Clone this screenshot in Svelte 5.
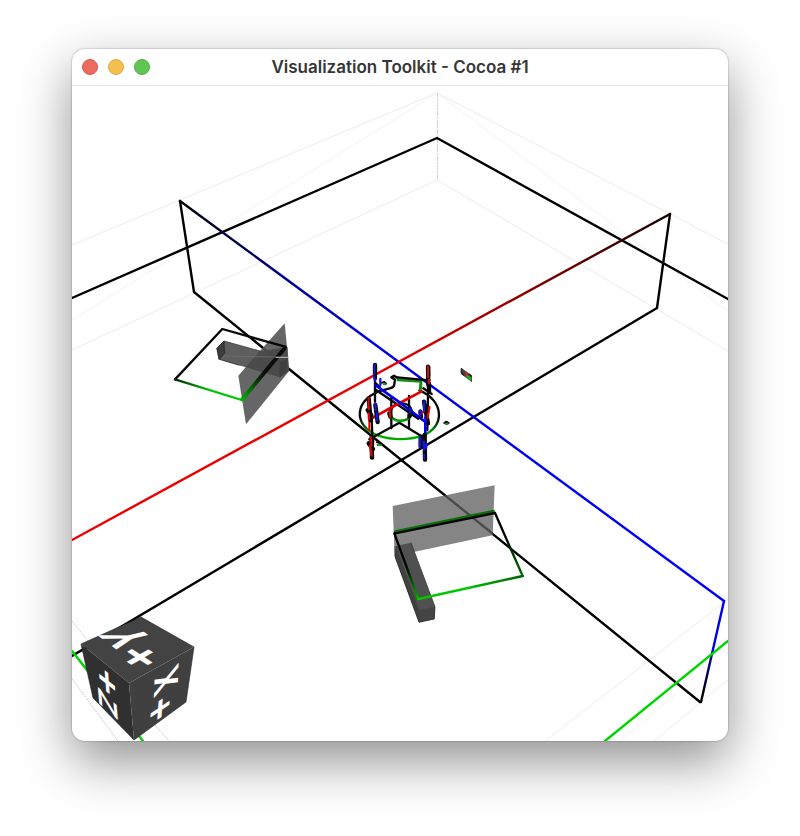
<script>
  const title = 'Visualization Toolkit - Cocoa #1';
  const controls = [
    { name: 'Close', color: '#ec6a5e', edge: '#d9574c' },
    { name: 'Minimize', color: '#f4bf4f', edge: '#dfa73d' },
    { name: 'Zoom', color: '#61c554', edge: '#4fae43' }
  ];

  // Faint edges of the world bounding box
  const guides = [
    'M72 245 437 93 728 244',
    'M72 350 437 180 728 351',
    'M728 599 545 741',
    'M728 680 654 741'
  ];
  const faintGuides = ['M72 320 437 93 728 311', 'M677 693 620 741'];

  const outlines = [
    'M72 298 437 138 728 299',
    'M670 214 657 308 72 656',
    'M180 201 194 292 700 702'
  ];

  // Glyphs lying on the faces of the orientation cube
  const labels = [
    { text: '+', matrix: 'matrix(-.54 -.35 .56 -.32 140 657)', size: 76, y: 25 },
    { text: 'Y', matrix: 'matrix(-.36 -.27 .69 -.16 126 638)', size: 82, y: 29 },
    { text: '+', matrix: 'matrix(.04 -.56 .56 -.38 160 709)', size: 66, y: 22 },
    { text: 'X', matrix: 'matrix(.02 -.5 .58 -.4 166 681)', size: 60, y: 21 },
    { text: '+', matrix: 'matrix(.05 .66 -.48 -.38 107 682)', size: 64, y: 21 },
    { text: 'Z', matrix: 'matrix(.05 .56 -.5 -.46 108 704)', size: 54, y: 19 }
  ];
</script>

<main>
  <section class="window" aria-label={title}>
    <header>
      <div class="controls">
        {#each controls as c}
          <button aria-label={c.name} style:background={c.color} style:border-color={c.edge}></button>
        {/each}
      </div>
      <h1>{title}</h1>
    </header>

    <svg class="scene" viewBox="72 86 656 655" role="img" aria-label="3D scene">
      <defs>
        <linearGradient id="red" gradientUnits="userSpaceOnUse" x1="670" y1="214" x2="72" y2="540">
          <stop offset="0" stop-color="#100" /><stop offset=".22" stop-color="#800000" />
          <stop offset=".45" stop-color="#e60000" /><stop offset="1" stop-color="#f00000" />
        </linearGradient>
        <linearGradient id="blue" gradientUnits="userSpaceOnUse" x1="180" y1="201" x2="724" y2="601">
          <stop offset="0" stop-color="#000" /><stop offset=".18" stop-color="#000088" />
          <stop offset=".36" stop-color="#0000e8" /><stop offset="1" stop-color="#0000fa" />
        </linearGradient>
        <linearGradient id="drop" gradientUnits="userSpaceOnUse" x1="724" y1="601" x2="701" y2="702">
          <stop offset="0" stop-color="#0000fa" /><stop offset=".45" stop-color="#0000d8" /><stop offset=".9" stop-color="#000" />
        </linearGradient>
        <linearGradient id="green1" gradientUnits="userSpaceOnUse" x1="45" y1="208" x2="150" y2="240">
          <stop offset="0" stop-color="#042804" /><stop offset="1" stop-color="#00c800" />
        </linearGradient>
        <linearGradient id="green2" gradientUnits="userSpaceOnUse" x1="245" y1="270" x2="320" y2="182">
          <stop offset="0" stop-color="#00b400" /><stop offset=".7" stop-color="#0a280a" /><stop offset="1" stop-color="#0c0c0c" />
        </linearGradient>
        <linearGradient id="green3" gradientUnits="userSpaceOnUse" x1="145" y1="387" x2="458" y2="318">
          <stop offset="0" stop-color="#00c800" /><stop offset=".45" stop-color="#00c800" /><stop offset="1" stop-color="#006000" />
        </linearGradient>
        <linearGradient id="green4" gradientUnits="userSpaceOnUse" x1="375" y1="128" x2="458" y2="318">
          <stop offset=".35" stop-color="#000" /><stop offset="1" stop-color="#007000" />
        </linearGradient>
        <linearGradient id="green5" gradientUnits="userSpaceOnUse" x1="73" y1="188" x2="145" y2="387">
          <stop offset=".5" stop-color="#000" /><stop offset="1" stop-color="#00b400" />
        </linearGradient>
        <linearGradient id="ring" gradientUnits="userSpaceOnUse" x1="0" y1="205" x2="0" y2="250">
          <stop offset="0" stop-color="#080808" /><stop offset="1" stop-color="#00a800" />
        </linearGradient>
        <linearGradient id="hub" gradientUnits="userSpaceOnUse" x1="0" y1="190" x2="0" y2="212">
          <stop offset="0" stop-color="#080808" /><stop offset="1" stop-color="#00a800" />
        </linearGradient>
      </defs>

      <g fill="none">
        {#each guides as d}<path {d} stroke="#ebebeb" />{/each}
        {#each faintGuides as d}<path {d} stroke="#f2f2f2" />{/each}
        <path d="M437.500 93V180" stroke="#d2d2d2" stroke-dasharray="5 1 2 1" />
        <path d="M72 621 118 678M72 679 118 741M155 725 169 741" stroke="#bbb" stroke-width=".8" stroke-dasharray="2 1" />
      </g>

      <g fill="none" stroke-width="2.400" stroke-linejoin="round" stroke-linecap="round">
        {#each outlines as d}<path {d} stroke="#000" />{/each}
        <path d="M180 201 724 601" stroke="url(#blue)" />
        <path d="M724 601 701 702" stroke="url(#drop)" />
        <path d="M670 214 72 540" stroke="url(#red)" />
        <path d="M728 641 605 741M72 651 143 741" stroke="#00d400" />
      </g>

      <!-- left bracket -->
      <g transform="translate(160 310) scale(.33333)">
        <path d="M374 40 388 182 258 343 235 197 295 128Z" fill="#555" fill-opacity=".9" />
        <path d="M192 93 300 123 383 112 386 184 360 202 175 148 170 115Z" fill="#484848" fill-opacity=".88" />
        <path d="M192 93 194 130 178 148 170 115Z" fill="#3c3c3c" />
        <path d="M192 93 194 130 178 148 170 115ZM192 93 300 123M178 148 238 166" fill="none" stroke="#222" stroke-width="2" />
        <path d="M360 155 383 143 380 187 358 203Z" fill="#404040" />
        <g fill="none" stroke-width="7" stroke-linecap="round" stroke-linejoin="round">
          <path d="M45 208 187 57 375 110" stroke="#080808" />
          <path d="M45 208 245 270" stroke="url(#green1)" />
          <path d="M247 268 375 113" stroke="url(#green2)" stroke-width="12" />
        </g>
        <path d="M190 138 386 142" stroke="#777" stroke-width="2" />
        <path d="M347 142 386 142" stroke="#bbb" stroke-width="3" />
      </g>

      <!-- front bracket -->
      <g transform="translate(370 470) scale(.33333)">
        <path d="M68 108 374 46 368 196 74 258Z" fill="#707070" fill-opacity=".85" />
        <path d="M220 72 368 190" stroke="#000" stroke-opacity=".25" stroke-width="6" />
        <path d="M78 228 123 218 195 410 193 447 147 457 75 260Z" fill="#505050" />
        <path d="M78 228 147 420 147 457 75 260Z" fill="#404040" />
        <path d="M147 420 195 410 193 447 147 457Z" fill="#454545" />
        <path d="M123 218 195 410 193 447 147 457 75 260V228" fill="none" stroke="#222" stroke-width="2" />
        <g fill="none" stroke-width="7" stroke-linecap="round">
          <path d="M75 184 371 123" stroke="#0a6e0a" />
          <path d="M75 190 375 129" stroke="#060606" />
          <path d="M375 129 458 318" stroke="url(#green4)" />
          <path d="M73 190 145 387" stroke="url(#green5)" />
          <path d="M145 387 458 318" stroke="url(#green3)" />
        </g>
      </g>

      <!-- central assembly -->
      <g transform="translate(340 350) scale(.33333)" fill="none" stroke-linecap="round" stroke-linejoin="round">
        <path d="M134 119C40 143 36 228 115 257C155 271 207 271 247 257C316 232 314 152 238 121" stroke="url(#ring)" stroke-width="7" />
        <g stroke="#080808" stroke-width="7">
          <path d="M105 45V155M105 98 120 112M154 142V235M207 138V235M265 85 262 240M95 205 97 260" />
          <path d="M108 120 235 206M88 268 178 218 250 262M250 115 275 132" />
          <path d="M154 82 162 77 172 83M154 82 165 89 162 108C154 119 142 113 134 121" />
        </g>
        <path d="M152 195C156 218 208 221 216 189" stroke="url(#hub)" stroke-width="8" />
        <path d="M152 188C151 153 216 148 216 189" stroke="#080808" stroke-width="6" />
        <path d="M174 89 243 94 241 119" stroke="#158a15" stroke-width="9" />
        <path d="M172 82 268 91" stroke="#080808" stroke-width="7" />
        <path d="M90 208 162 168 245 124" stroke="#e00000" stroke-width="8" />
        <path d="M107 106 180 158 256 216V258" stroke="#0000ee" stroke-width="8" />
        <path d="M88 210V240" stroke="#e00000" stroke-width="6" />
        <g stroke="#080808" stroke-width="13">
          <path d="M86 145 92 210M106 165 113 216M95 260 96 323M252 155 264 220M264 50 265 105M254 255 255 329M105 45V72" />
          <path d="M267 102V125M83 180 94 196M86 280 99 297M211 182 208 200M148 190 151 200M241 185 243 200M242 265V290" />
        </g>
        <g stroke="#c80d0d" stroke-width="7">
          <path d="M86 145V178M86 190 87 207M92 262 95 285M90 288 95 317M264 50V80M266 90 267 99M268 171 263 203M149 181 151 201M251 185 245 190" />
        </g>
        <g stroke="#1515dc" stroke-width="7">
          <path d="M104 45 104 72M102 80 105 92M106 162 107 180M111 190 112 210M252 155V182M241 181V199M255 202 257 215M240 262 240 291M252 275 253 300M260 282 258 295M253 315 254 325M212 175 211 188M121 87V105" />
        </g>
        <path d="M109 50 109 87M91 148V166M269 50V78M258 164V195M101 270 100 289M257 300V326" stroke="#080808" stroke-width="4" />
        <g stroke-width="6">
          <path d="M126 98 133 96 138 101M313 219 319 215 326 219M111 277 117 278" stroke="#111" />
          <path d="M131 103H136M317 222H323M113 285H122" stroke="#259425" />
        </g>
      </g>

      <!-- small marker -->
      <g transform="translate(440 355) scale(.33333)">
        <path d="M64 38 96 62V82L64 58Z" fill="#444" />
        <path d="M76 49 84 54V65L76 59Z" fill="#d02020" />
        <path d="M78 60 94 67V77L78 66Z" fill="#18b818" />
        <path d="M64 40V54L72 61M86 56 95 64" fill="none" stroke="#222" stroke-width="4" />
      </g>

      <!-- orientation cube -->
      <path d="M81 644 141 617 194 647 129 683Z" fill="#434343" />
      <path d="M81 644 129 683 134 740 93 698Z" fill="#303030" />
      <path d="M129 683 194 647 186 702 134 740Z" fill="#404040" />
      <path d="M81 644 141 617 194 647 186 702 134 740 93 698Z" fill="none" stroke="#222" stroke-width=".6" />
      {#each labels as l}
        <text class="face" transform={l.matrix} font-size={l.size} y={l.y} text-anchor="middle">{l.text}</text>
      {/each}
    </svg>
  </section>
</main>

<style>
  :global(body) {
    margin: 0;
    background: #fff;
  }
  main {
    padding: 49px 72px 95px;
    overflow: hidden;
  }
  .window {
    background: #fff;
    border-radius: 13px;
    box-shadow:
      0 0 1px 1px rgba(0, 0, 0, 0.12),
      0 20px 52px rgba(0, 0, 0, 0.44);
    overflow: hidden;
  }
  header {
    display: grid;
    grid-template-columns: 1fr auto 1fr;
    align-items: center;
    height: 36px;
    border-bottom: 1px solid #e4e4e4;
  }
  .controls {
    display: flex;
    gap: 10px;
    padding-left: 10px;
  }
  button {
    width: 16px;
    height: 16px;
    padding: 0;
    border: 1px solid;
    border-radius: 50%;
  }
  h1 {
    margin: 0;
    font: 600 17px/20px Inter, 'Liberation Sans', sans-serif;
    color: #363636;
  }
  .scene {
    display: block;
    width: 100%;
    height: auto;
  }
  .face {
    font-family: 'Liberation Sans', sans-serif;
    font-weight: 700;
    fill: #fff;
  }
</style>
